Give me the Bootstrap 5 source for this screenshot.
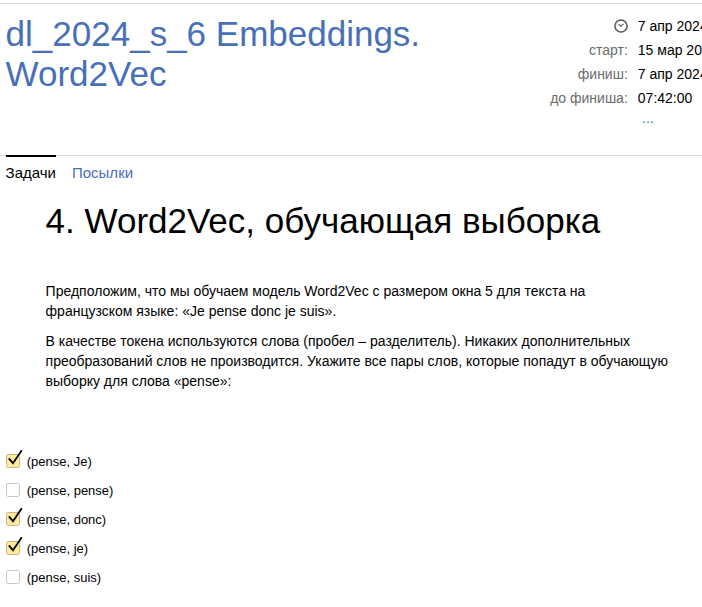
<!DOCTYPE html>
<html lang="ru">
<head>
<meta charset="utf-8">
<meta name="viewport" content="width=device-width, initial-scale=1">
<title>dl_2024_s_6 Embeddings. Word2Vec</title>
<link href="https://cdn.jsdelivr.net/npm/bootstrap@5.3.0/dist/css/bootstrap.min.css" rel="stylesheet">
<style>
body { font-family: "Liberation Sans", Arial, sans-serif; font-size: 14px; line-height: 20px; color: #000; background: #fff; overflow: hidden; height: 607px; }
.contest-head { border-top: 1px solid #e0e0e0; margin-top: 3px; height: 152px; padding: 10px 0 0 5.6px; }
.contest-title { font-size: 35px; line-height: 40px; font-weight: 400; color: #4770b8; width: 450px; }
.times { grid-template-columns: 100px 1fr; column-gap: 10px; width: 174.2px; line-height: 24px; margin: 0; }
.times dt { font-weight: 400; color: #6b6b6b; text-align: right; white-space: nowrap; }
.times dd { margin: 0; white-space: nowrap; overflow: hidden; }
.times svg { display: block; margin: 5px 0 0 auto; }
.times .more { color: #3f6fc0; line-height: 16px; padding-left: 4.2px; }
.tabs { border-top: 1px solid #d9d9d9; padding-left: 5.6px; gap: 16px; height: 35px; font-size: 15px; }
.tabs .nav-link { padding: 7px 0 0; color: #4770b8; }
.tabs .nav-link.active { color: #000; border-top: 2px solid #000; margin-top: -1px; padding-top: 6px; }
.problem { padding: 11px 0 0 45.6px; }
.problem-title { font-size: 35px; line-height: 40px; font-weight: 400; margin-bottom: 40px; }
.problem p { width: 630px; margin-bottom: 10px; }
.answers { padding: 61px 0 0 6px; font-size: 13px; }
.answers label { height: 29px; gap: 6.7px; }
.answers svg { overflow: visible; margin-top: -1px; }
</style>
<script src="https://cdn.jsdelivr.net/npm/bootstrap@5.3.0/dist/js/bootstrap.bundle.min.js"></script>
</head>
<body>
<svg class="d-none" aria-hidden="true">
  <symbol id="box-on" viewBox="0 0 18 18" overflow="visible"><rect x=".5" y="3.5" width="13" height="13" rx="2" fill="#ffeba0" stroke="#c8b77f"/><path d="M2.8 7.3 7 12.2 15.8 -.8" fill="none" stroke="#000" stroke-width="1.8"/></symbol>
  <symbol id="box-off" viewBox="0 0 18 18"><rect x=".5" y="3.5" width="13" height="13" rx="2" fill="#fff" stroke="#c6c6c6"/></symbol>
</svg>
<header class="contest-head d-flex justify-content-between">
  <h1 class="contest-title m-0">dl_2024_s_6 Embeddings. Word2Vec</h1>
  <dl class="times d-grid align-content-start">
    <dt><svg width="14" height="14" viewBox="0 0 14 14" fill="none"><circle cx="7" cy="7" r="6.1" stroke="#55575c" stroke-width="1.5"/><path d="M4.7 5.2 6.8 7.2 9.6 4.9" stroke="#55575c" stroke-width="1.1"/></svg></dt><dd>7 апр 2024</dd>
    <dt>старт:</dt><dd>15 мар 20</dd>
    <dt>финиш:</dt><dd>7 апр 2024</dd>
    <dt>до финиша:</dt><dd>07:42:00</dd>
    <dt></dt><dd class="more">...</dd>
  </dl>
</header>
<nav class="nav tabs align-items-start"><a class="nav-link active" href="#">Задачи</a><a class="nav-link" href="#">Посылки</a></nav>
<main>
  <section class="problem">
    <h2 class="problem-title">4. Word2Vec, обучающая выборка</h2>
    <p>Предположим, что мы обучаем модель Word2Vec с размером окна 5 для текста на<br>французском языке: «Je pense donc je suis».</p>
    <p class="mb-0">В качестве токена используются слова (пробел – разделитель). Никаких дополнительных<br>преобразований слов не производится. Укажите все пары слов, которые попадут в обучающую<br>выборку для слова «pense»:</p>
  </section>
  <form class="answers d-flex flex-column align-items-start">
    <label class="d-flex"><svg width="14" height="18"><use href="#box-on" width="18" height="18"/></svg><span>(pense, Je)</span></label>
    <label class="d-flex"><svg width="14" height="18"><use href="#box-off" width="18" height="18"/></svg><span>(pense, pense)</span></label>
    <label class="d-flex"><svg width="14" height="18"><use href="#box-on" width="18" height="18"/></svg><span>(pense, donc)</span></label>
    <label class="d-flex"><svg width="14" height="18"><use href="#box-on" width="18" height="18"/></svg><span>(pense, je)</span></label>
    <label class="d-flex"><svg width="14" height="18"><use href="#box-off" width="18" height="18"/></svg><span>(pense, suis)</span></label>
  </form>
</main>
</body>
</html>
